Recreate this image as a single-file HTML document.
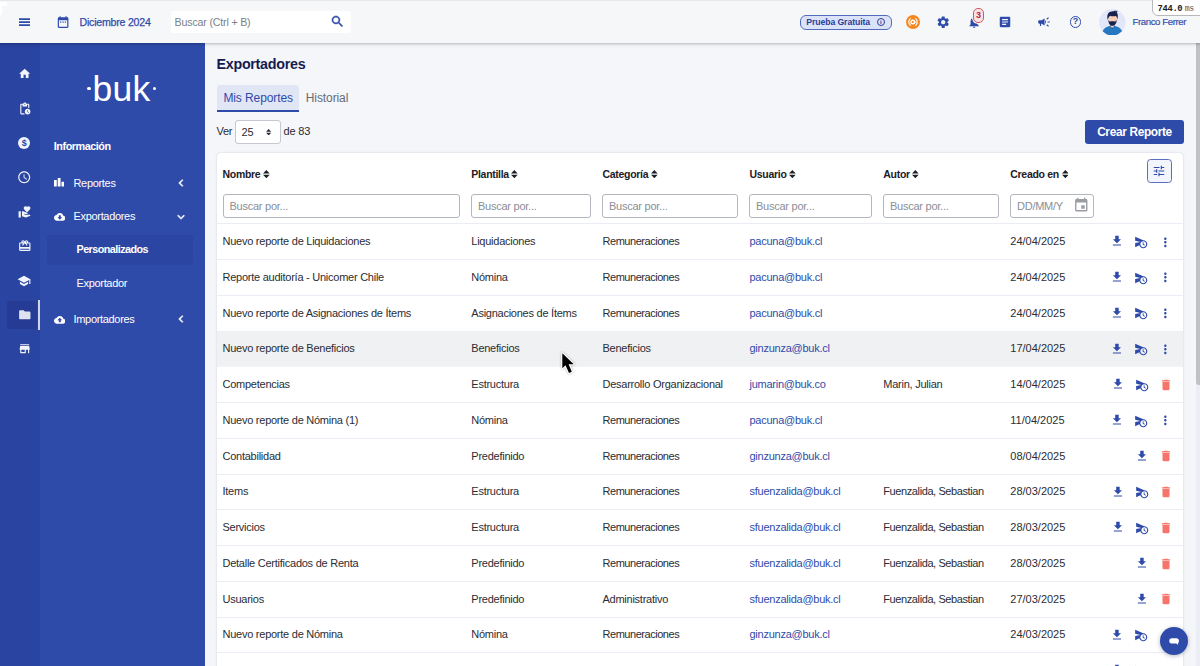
<!DOCTYPE html>
<html lang="es">
<head>
<meta charset="utf-8">
<title>Exportadores</title>
<style>
*{box-sizing:border-box;margin:0;padding:0}
html,body{width:1200px;height:666px;overflow:hidden}
body{font-family:"Liberation Sans",sans-serif;font-size:11px;color:#2a2d34;background:#f5f6f9;position:relative}
.abs{position:absolute}
i{font-style:normal}
#top{position:absolute;left:0;top:0;width:1200px;height:43px;background:#f6f7f9;box-shadow:0 1px 2px rgba(0,0,0,.2),0 2px 4px rgba(0,0,0,.07), inset 0 1px 0 #e7e7e9;z-index:5}
#top .t{position:absolute;color:#2f4baa;white-space:nowrap}
#mes{left:79.500px;top:14.800px;font-size:10.600px;line-height:14px;letter-spacing:-.22px;-webkit-text-stroke:.25px #2f4baa}
#user{left:1132.400px;top:15px;font-size:9.700px;line-height:14px;letter-spacing:-.42px;-webkit-text-stroke:.15px #2f4baa}
#search{position:absolute;left:171.300px;top:11px;width:180px;height:22px;background:#fff;border-radius:2px}
#search span{position:absolute;left:3.300px;top:4px;font-size:10.700px;line-height:14px;color:#7b7f88;letter-spacing:-.2px}
#pill{position:absolute;left:800px;top:14.800px;width:92px;height:15.500px;border:1px solid #546bbd;border-radius:6px;background:#dbe3f8;color:#2a3f9a;font-weight:bold;font-size:8.700px;line-height:13.500px;padding-left:5.300px;white-space:nowrap;letter-spacing:-.1px}
#info{position:absolute;left:75.500px;top:2.300px;width:8.400px;height:8.400px;border:1px solid #2a3f9a;border-radius:50%;font-size:6px;line-height:6.400px;text-align:center;font-weight:bold}
#badge{position:absolute;left:972.900px;top:7.800px;width:11.200px;height:15.200px;border:1px solid #cf5a5f;border-radius:5px;background:#f8e3e4;color:#b8283a;box-shadow:0 0 0 1px #f6f7f9;font-size:9px;font-weight:bold;line-height:13px;text-align:center}
#help{position:absolute;left:1069.600px;top:16.400px;width:11.600px;height:11.600px;border:1.300px solid #2f4baa;border-radius:50%;color:#2f4baa;font-size:9px;font-weight:bold;line-height:9.200px;text-align:center}
#ms{position:absolute;left:1151.600px;top:-1px;width:60px;height:16.600px;background:#fff;border:1px solid #b9b9b9;border-radius:0 0 0 6px;font-family:"Liberation Mono","DejaVu Sans Mono",monospace;font-size:8.300px;line-height:17px;padding-left:5px;color:#555;white-space:nowrap;letter-spacing:-.3px}
#ms b{color:#222;font-size:8.800px;margin-right:-2.300px;letter-spacing:-.35px}
#rail{position:absolute;left:0;top:43px;width:40px;height:623px;background:#2a44a1}
#railsel{position:absolute;left:7px;top:258.400px;width:29.500px;height:28px;background:#263c94;border-radius:3px}
#railbar{position:absolute;left:37.800px;top:257px;width:2.200px;height:29.500px;background:#d0d5e6}
#dollar{position:absolute;left:18.300px;width:12px;height:12px;border-radius:50%;background:#f2f4fb;color:#2a44a1;font-size:9px;font-weight:bold;line-height:12.400px;text-align:center}
#side{position:absolute;left:40px;top:43px;width:165px;height:623px;background:#2f4baa;color:#fff}
#side .i{position:absolute;white-space:nowrap;font-size:11px;line-height:13px;color:#fff;letter-spacing:-.32px}
#side .b{font-weight:bold;font-size:10.800px;letter-spacing:-.45px}
#side .sb{font-weight:bold;font-size:10.800px;letter-spacing:-.55px}
#sel{position:absolute;left:6.800px;top:192px;width:146.400px;height:30px;background:#2b45a2;border-radius:4px}
#logo{position:absolute;left:52.500px;top:26px;font-size:35.500px;line-height:40px;color:#fff;letter-spacing:.2px}
.dot{position:absolute;width:3.400px;height:3.400px;border-radius:50%;background:#fff}
h1{position:absolute;left:216.500px;top:55.400px;font-size:14.300px;font-weight:bold;color:#151b4f;line-height:18px;letter-spacing:-.28px}
#tab1{position:absolute;left:217px;top:85.200px;width:82.300px;height:27.100px;background:#e1e6f5;border-bottom:2px solid #2f4baa;border-radius:3px 3px 0 0;color:#2f4baa;font-size:12px;line-height:26.400px;text-align:center;letter-spacing:-.1px}
#tab2{position:absolute;left:305.800px;top:85.300px;font-size:12px;line-height:26.400px;color:#666b75;letter-spacing:-.1px}
#ver{position:absolute;left:216.500px;top:124.900px;font-size:11px;line-height:13px;letter-spacing:-.3px}
#sel25{position:absolute;left:235px;top:120px;width:46px;height:24px;background:#fff;border:1px solid #c5c8d0;border-radius:3px;font-size:11px;line-height:22px;padding-left:5.500px}
#de83{position:absolute;left:283.500px;top:124.900px;font-size:11px;line-height:13px;letter-spacing:-.15px}
#crear{position:absolute;left:1085px;top:120px;width:99px;height:24px;background:#2f4baa;border-radius:3px;color:#fff;font-size:11.900px;font-weight:bold;line-height:24px;text-align:center;letter-spacing:-.35px}
#card{position:absolute;left:217px;top:153px;width:966.400px;height:520px;background:#fff;border-radius:4px;box-shadow:0 0 2px rgba(80,90,120,.3);overflow:hidden}
.th{position:absolute;top:15.200px;font-size:10.500px;font-weight:bold;color:#1d2027;line-height:12px;white-space:nowrap;letter-spacing:-.3px}
.srt{margin-left:2.600px;vertical-align:-.3px}
.in{position:absolute;top:41px;height:23.500px;border:1px solid #b4b6bd;border-radius:3px;background:#fff;font-size:11px;color:#8a8e96;line-height:22px;padding-left:6px;letter-spacing:-.25px}
#tune{position:absolute;left:929.800px;top:5.500px;width:25.400px;height:24.300px;border:1px solid #5a70bf;border-radius:3.500px;background:#f3f5fc}
.row{position:absolute;left:0;width:968px;height:36px;border-top:1px solid #ebedf4}
.row span{position:absolute;top:10.900px;font-size:11px;line-height:13px;white-space:nowrap;color:#2a2d34;letter-spacing:-.25px}
.row span.u{color:#2f4baa}
.c1{left:5.500px}.c2{left:254.300px}.c3{left:385.500px}.c4{left:532.500px}.c5{left:666.300px}.c6{left:793.300px;letter-spacing:0 !important}
.hov{background:#f0f1f3;border-top-color:#eeeff2}
.nb{border-top-color:#f3f4f8}
#sbtrack{position:absolute;left:1195.500px;top:43px;width:4.500px;height:623px;background:#eceef6;z-index:4}
#sbthumb{position:absolute;left:1196px;top:43px;width:6px;height:342px;background:#c1c1c3;border-radius:0 0 0 3px;z-index:4}
#chat{position:absolute;left:1160.300px;top:627px;width:28px;height:28px;border-radius:50%;background:#2f4baa;box-shadow:0 1px 4px rgba(40,50,90,.35);z-index:10}
</style>
</head>
<body>
<div id="top">
<div class="abs" style="left:0;top:2px;width:7px;height:4px;background:#fff"></div><div class="abs" style="left:0;top:6px;width:1.500px;height:9px;background:#fff"></div>
<svg class="abs" style="left:18.600px;top:18px" width="11" height="9" viewBox="0 0 11 9"><path d="M0 .3h11v1.800H0zM0 3.300h11v1.800H0zM0 6.300h11v1.800H0z" fill="#2f4baa"/></svg>
<svg class="abs" style="left:56.30px;top:15.20px;" width="14.20" height="14.20" viewBox="0 0 24 24"><path fill="#2f4baa" d="M9 11H7v2h2v-2zm4 0h-2v2h2v-2zm4 0h-2v2h2v-2zm2-7h-1V2h-2v2H8V2H6v2H5c-1.110 0-1.990.9-1.990 2L3 20c0 1.100.890 2 2 2h14c1.100 0 2-.9 2-2V6c0-1.100-.9-2-2-2zm0 16H5V9h14v11z"/></svg>
<span class="t" id="mes">Diciembre 2024</span>
<div id="search"><span>Buscar (Ctrl + B)</span><svg class="abs" style="left:158.60px;top:3.20px;" width="15.00" height="15.00" viewBox="0 0 24 24"><path fill="#2f4baa" stroke="#2f4baa" stroke-width="0.7" d="M15.5 14h-.79l-.28-.27C15.41 12.59 16 11.11 16 9.5 16 5.91 13.09 3 9.5 3S3 5.91 3 9.5 5.91 16 9.5 16c1.61 0 3.09-.59 4.23-1.570l.27.28v.79l5 4.990L20.490 19l-4.990-5zm-6 0C7.010 14 5 11.990 5 9.500S7.010 5 9.500 5 14 7.010 14 9.500 11.990 14 9.500 14z"/></svg></div>
<div id="pill">Prueba Gratuita<i id="info">i</i></div>
<svg class="abs" style="left:905.500px;top:14.700px" width="14" height="14" viewBox="0 0 14 14"><circle cx="7" cy="7" r="7" fill="#f6861f"/><circle cx="6.800" cy="7" r="1.800" fill="none" stroke="#fff" stroke-width="1.400"/><path d="M8.600 7h1.600" stroke="#fff" stroke-width="1"/><path d="M4.3 3.6A4.6 4.6 0 0 0 4.300 10.400M9.700 3.600A4.600 4.600 0 0 1 9.700 10.400" fill="none" stroke="#fff" stroke-width="1.2" stroke-linecap="round"/></svg>
<svg class="abs" style="left:936.30px;top:14.60px;" width="14.40" height="14.40" viewBox="0 0 24 24"><path fill="#2f4baa" d="M19.140 12.940c.040-.3.060-.610.060-.940 0-.320-.020-.640-.070-.940l2.030-1.580c.180-.140.230-.410.120-.610l-1.920-3.320c-.120-.220-.370-.290-.590-.220l-2.390.960c-.5-.380-1.030-.7-1.620-.940l-.360-2.540c-.040-.240-.240-.410-.480-.410h-3.840c-.240 0-.430.170-.470.410l-.360 2.540c-.590.240-1.130.570-1.620.940l-2.390-.960c-.220-.080-.470 0-.590.220L2.740 8.870c-.120.210-.080.470.120.610l2.030 1.580c-.050.3-.090.630-.090.940s.020.640.070.940l-2.030 1.580c-.180.140-.230.410-.120.610l1.920 3.320c.120.220.370.290.590.220l2.390-.960c.5.380 1.030.7 1.620.940l.360 2.540c.050.240.240.410.480.410h3.840c.240 0 .440-.170.470-.410l.360-2.540c.590-.240 1.130-.560 1.620-.940l2.390.960c.220.080.470 0 .590-.220l1.920-3.320c.120-.220.070-.470-.120-.610l-2.010-1.580zM12 15.600c-1.980 0-3.600-1.620-3.600-3.600s1.620-3.600 3.600-3.600 3.600 1.620 3.600 3.600-1.620 3.600-3.600 3.600z"/></svg>
<svg class="abs" style="left:967.20px;top:14.90px;" width="14.20" height="14.20" viewBox="0 0 24 24"><path fill="#2f4baa" d="M12 22c1.100 0 2-.9 2-2h-4c0 1.100.890 2 2 2zm6-6v-5c0-3.070-1.640-5.640-4.500-6.320V4c0-.830-.670-1.500-1.500-1.500s-1.500.670-1.500 1.500v.680C7.630 5.360 6 7.920 6 11v5l-2 2v1h16v-1l-2-2z"/></svg>
<div id="badge">3</div>
<svg class="abs" style="left:998.00px;top:15.20px;" width="14.00" height="14.00" viewBox="0 0 24 24"><path fill="#2f4baa" d="M19 3H5c-1.100 0-2 .9-2 2v14c0 1.100.9 2 2 2h14c1.100 0 2-.9 2-2V5c0-1.100-.9-2-2-2zm-5 14H7v-2h7v2zm3-4H7v-2h10v2zm0-4H7V7h10v2z"/></svg>
<svg class="abs" style="left:1037.20px;top:15.30px;" width="14.00" height="14.00" viewBox="0 0 24 24"><path fill="#2f4baa" d="M18 11v2h4v-2h-4zm-2 6.610c.960.710 2.210 1.650 3.200 2.390.4-.530.8-1.070 1.200-1.600-.990-.740-2.240-1.680-3.200-2.400-.4.540-.8 1.080-1.200 1.610zM20.400 5.600c-.4-.530-.8-1.070-1.200-1.600-.990.740-2.240 1.680-3.200 2.400.4.530.8 1.070 1.200 1.600.960-.720 2.210-1.650 3.200-2.400zM4 9c-1.100 0-2 .9-2 2v2c0 1.100.9 2 2 2h1v4h2v-4h1l5 3V6L8 9H4zm11.500 3c0-1.330-.580-2.530-1.500-3.350v6.690c.920-.810 1.500-2.010 1.500-3.340z"/></svg>
<div id="help">?</div>
<svg class="abs" style="left:1099px;top:8.900px" width="26.500" height="26.500" viewBox="0 0 26 26"><defs><clipPath id="av"><circle cx="13" cy="13" r="13"/></clipPath></defs><circle cx="13" cy="13" r="13" fill="#e1e6fa"/><g clip-path="url(#av)"><path d="M2.800 27c0-6.800 3-10.200 10.300-10.200S23.400 20.200 23.400 27z" fill="#2679c0"/><path d="M10 17.200l3.100 2.600 3.100-2.600-1.300-1.200h-3.600z" fill="#1c5f9e"/><rect x="11.500" y="14.500" width="3.200" height="3.600" fill="#f2c7a8"/><rect x="9.400" y="5.500" width="8.200" height="8" rx="2" fill="#f6cdb6"/><path d="M9.200 10.600c0 4.200 1.700 5.900 3.900 5.900s4.200-1.700 4.200-5.900c-.6 1.300-1.200 1.700-2 1.700-.8-.5-3.400-.5-4.200 0-.8 0-1.400-.4-1.900-1.700z" fill="#18224a"/><path d="M8.600 10.800c-1.200-4.900.3-8 3.800-8.300 1.600-.2 2.800-.2 3.600-1.200.3.500.3.900.1 1.200.9-.3 1.500-.8 1.800-1.200.3 1.100-.1 1.900-.5 2.400 1.400.9 1.300 4.300.6 6.800-.2-1.900-.7-3-1.500-3.600-2 .5-4.300.4-5.700-.3-.9.700-1.700 2.200-2.200 4.200z" fill="#18224a"/></g></svg>
<span class="t" id="user">Franco Ferrer</span>
<div id="ms"><b>744.0</b> ms</div>
</div>
<div id="rail"><div id="railsel"></div><div id="railbar"></div>
<svg class="abs" style="left:17.65px;top:24.35px;" width="13.30" height="13.30" viewBox="0 0 24 24"><path fill="#f2f4fb" d="M10 20v-6h4v6h5v-8h3L12 3 2 12h3v8z"/></svg>
<svg class="abs" style="left:17.50px;top:58.80px;" width="13.60" height="13.60" viewBox="0 0 24 24"><path fill="#f2f4fb" d="M17 12c-2.760 0-5 2.240-5 5s2.240 5 5 5 5-2.240 5-5-2.240-5-5-5zm1.650 7.350L16.500 17.200V14h1v2.790l1.850 1.850-.700.710zM18 3h-3.180C14.400 1.840 13.300 1 12 1s-2.400.840-2.820 2H6c-1.100 0-2 .9-2 2v15c0 1.100.9 2 2 2h6.110c-.590-.570-1.070-1.250-1.420-2H6V5h2v3h8V5h2v5.080c.710.100 1.380.310 2 .600V5c0-1.100-.9-2-2-2zm-6 2c-.550 0-1-.450-1-1s.450-1 1-1 1 .450 1 1-.450 1-1 1z"/></svg>
<div id="dollar" style="top:94.0px">$</div>
<svg class="abs" style="left:17.10px;top:127.20px;" width="14.40" height="14.40" viewBox="0 0 24 24"><path fill="#f2f4fb" d="M11.990 2C6.470 2 2 6.480 2 12s4.470 10 9.990 10C17.520 22 22 17.520 22 12S17.520 2 11.990 2zM12 20c-4.420 0-8-3.580-8-8s3.580-8 8-8 8 3.580 8 8-3.580 8-8 8zm.5-13H11v6l5.250 3.150.750-1.230-4.500-2.670z"/></svg>
<svg class="abs" style="left:17.50px;top:162.40px;" width="13.60" height="13.60" viewBox="0 0 24 24"><path fill="#f2f4fb" d="M1 11h4v11H1zM16 3.250C16.650 2.490 17.660 2 18.700 2 20.550 2 22 3.450 22 5.300c0 2.270-2.910 4.900-6 7.700-3.090-2.810-6-5.440-6-7.700C10 3.450 11.450 2 13.300 2c1.040 0 2.050.490 2.700 1.250zM20 17h-7l-2.090-.730.330-.940L13 16h2.820c.650 0 1.180-.530 1.180-1.180 0-.490-.310-.930-.770-1.110L8.970 11H7v9.020L14 22l8.010-3c-.010-1.100-.9-2-2.010-2z"/></svg>
<svg class="abs" style="left:17.50px;top:196.20px;" width="13.60" height="13.60" viewBox="0 0 24 24"><path fill="#f2f4fb" d="M20 6h-2.180c.110-.310.180-.650.180-1 0-1.660-1.340-3-3-3-1.050 0-1.960.540-2.500 1.350l-.5.670-.5-.680C10.960 2.540 10.050 2 9 2 7.340 2 6 3.340 6 5c0 .350.070.690.180 1H4c-1.110 0-1.990.890-1.990 2L2 19c0 1.110.890 2 2 2h16c1.110 0 2-.890 2-2V8c0-1.110-.890-2-2-2zm-5-2c.550 0 1 .450 1 1s-.450 1-1 1-1-.450-1-1 .450-1 1-1zM9 4c.550 0 1 .450 1 1s-.450 1-1 1-1-.450-1-1 .450-1 1-1zm11 15H4v-2h16v2zm0-5H4V8h5.080L7 10.830 8.620 12 11 8.760l1-1.360 1 1.360L15.380 12 17 10.830 14.920 8H20v6z"/></svg>
<svg class="abs" style="left:17.30px;top:230.60px;" width="14.00" height="14.00" viewBox="0 0 24 24"><path fill="#f2f4fb" d="M5 13.180v4L12 21l7-3.820v-4L12 17l-7-3.820zM12 3L1 9l11 6 9-4.910V17h2V9L12 3z"/></svg>
<svg class="abs" style="left:17.50px;top:265.00px;" width="13.60" height="13.60" viewBox="0 0 24 24"><path fill="#dfe3f0" d="M10 4H4c-1.100 0-1.990.9-1.990 2L2 18c0 1.100.9 2 2 2h16c1.100 0 2-.9 2-2V8c0-1.100-.9-2-2-2h-8l-2-2z"/></svg>
<svg class="abs" style="left:17.60px;top:299.30px;" width="13.40" height="13.40" viewBox="0 0 24 24"><path fill="#f2f4fb" d="M20 4H4v2h16V4zm1 10v-2l-1-5H4l-1 5v2h1v6h10v-6h4v6h2v-6h1zm-9 4H6v-4h6v4z"/></svg>
</div>
<div id="side">
<div id="sel"></div>
<span id="logo">buk</span><i class="dot" style="left:47.200px;top:43.700px"></i><i class="dot" style="left:112.600px;top:43.700px"></i>
<span class="i b" style="left:13.800px;top:97px">Información</span>
<svg class="abs" style="left:14px;top:135.400px" width="10.400" height="8.600" viewBox="0 0 10.400 8.600"><path d="M0 2.100h2.800v6.500H0zM3.750 0h2.800v8.600h-2.800zM7.500 3.800h2.800v4.800h-2.800z" fill="#fff"/></svg><span class="i" style="left:33.500px;top:133.500px">Reportes</span><svg class="abs" style="left:133.80px;top:133.00px;" width="14.00" height="14.00" viewBox="0 0 24 24"><path fill="#fff" stroke="#fff" stroke-width="0.9" d="M15.410 7.410L14 6l-6 6 6 6 1.410-1.410L10.830 12z"/></svg>
<svg class="abs" style="left:13.50px;top:167.50px;" width="11.60" height="11.60" viewBox="0 0 24 24"><path fill="#fff" d="M19.350 10.040C18.670 6.590 15.640 4 12 4 9.110 4 6.600 5.640 5.350 8.040 2.340 8.360 0 10.910 0 14c0 3.310 2.690 6 6 6h13c2.760 0 5-2.240 5-5 0-2.640-2.050-4.780-4.650-4.960zM17 13l-5 5-5-5h3V9h4v4h3z"/></svg><span class="i" style="left:33.500px;top:166.700px">Exportadores</span><svg class="abs" style="left:134.40px;top:166.60px;" width="14.00" height="14.00" viewBox="0 0 24 24"><path fill="#fff" stroke="#fff" stroke-width="0.9" d="M16.590 8.590L12 13.170 7.410 8.590 6 10l6 6 6-6z"/></svg>
<span class="i sb" style="left:36.500px;top:200px">Personalizados</span>
<span class="i" style="left:36.500px;top:233.500px">Exportador</span>
<svg class="abs" style="left:13.50px;top:270.70px;" width="11.60" height="11.60" viewBox="0 0 24 24"><path fill="#fff" d="M19.350 10.040C18.670 6.590 15.640 4 12 4 9.110 4 6.600 5.640 5.350 8.040 2.340 8.360 0 10.910 0 14c0 3.310 2.690 6 6 6h13c2.760 0 5-2.240 5-5 0-2.640-2.050-4.780-4.650-4.960zM14 13v4h-4v-4H7l5-5 5 5h-3z"/></svg><span class="i" style="left:33.500px;top:269.700px">Importadores</span><svg class="abs" style="left:133.80px;top:269.20px;" width="14.00" height="14.00" viewBox="0 0 24 24"><path fill="#fff" stroke="#fff" stroke-width="0.9" d="M15.410 7.410L14 6l-6 6 6 6 1.410-1.410L10.830 12z"/></svg>
</div>
<h1>Exportadores</h1>
<div id="tab1">Mis Reportes</div>
<div id="tab2">Historial</div>
<div id="ver">Ver</div><div id="sel25">25<svg class="abs" style="left:30.300px;top:7.600px" width="5.200" height="6.500" viewBox="0 0 6 7.500"><path d="M3 0L5.900 3.100H.1zM3 7.500L.1 4.400h5.800z" fill="#2a2d34"/></svg></div><div id="de83">de 83</div>
<div id="crear">Crear Reporte</div>
<div id="card">
<span class="th" style="left:5.5px">Nombre<svg class="srt" width="6.700" height="8.300" viewBox="0 0 7 8.600"><path d="M3.500 0L7 3.600H0zM3.500 8.600L0 5h7z" fill="#1d2027"/></svg></span>
<span class="th" style="left:254.3px">Plantilla<svg class="srt" width="6.700" height="8.300" viewBox="0 0 7 8.600"><path d="M3.500 0L7 3.600H0zM3.500 8.600L0 5h7z" fill="#1d2027"/></svg></span>
<span class="th" style="left:385.5px">Categoría<svg class="srt" width="6.700" height="8.300" viewBox="0 0 7 8.600"><path d="M3.500 0L7 3.600H0zM3.500 8.600L0 5h7z" fill="#1d2027"/></svg></span>
<span class="th" style="left:532.5px">Usuario<svg class="srt" width="6.700" height="8.300" viewBox="0 0 7 8.600"><path d="M3.500 0L7 3.600H0zM3.500 8.600L0 5h7z" fill="#1d2027"/></svg></span>
<span class="th" style="left:666.3px">Autor<svg class="srt" width="6.700" height="8.300" viewBox="0 0 7 8.600"><path d="M3.500 0L7 3.600H0zM3.500 8.600L0 5h7z" fill="#1d2027"/></svg></span>
<span class="th" style="left:793.3px">Creado en<svg class="srt" width="6.700" height="8.300" viewBox="0 0 7 8.600"><path d="M3.500 0L7 3.600H0zM3.500 8.600L0 5h7z" fill="#1d2027"/></svg></span>
<div class="in" style="left:5.5px;width:237px">Buscar por...</div>
<div class="in" style="left:254.0px;width:120px">Buscar por...</div>
<div class="in" style="left:385.0px;width:136px">Buscar por...</div>
<div class="in" style="left:532.0px;width:123px">Buscar por...</div>
<div class="in" style="left:666.0px;width:116px">Buscar por...</div>
<div class="in" style="left:793px;width:84px">DD/MM/Y<svg class="abs" style="left:62.35px;top:2.25px;" width="16.50" height="16.50" viewBox="0 0 24 24"><path fill="#9a9da4" d="M17 12h-5v5h5v-5zM16 1v2H8V1H6v2H5c-1.110 0-1.990.9-1.990 2L3 19c0 1.100.890 2 2 2h14c1.100 0 2-.9 2-2V5c0-1.100-.9-2-2-2h-1V1h-2zm3 18H5V8h14v11z"/></svg></div>
<div id="tune"><svg class="abs" style="left:4.40px;top:4.20px;" width="14.00" height="14.00" viewBox="0 0 24 24"><path fill="#2f4baa" d="M3 17v2h6v-2H3zM3 5v2h10V5H3zm10 16v-2h8v-2h-8v-2h-2v6h2zM7 9v2H3v2h4v2h2V9H7zm14 4v-2H11v2h10zm-6-4h2V7h4V5h-4V3h-2v6z"/></svg></div>
<div class="row" style="top:70.30px"><span class="c1">Nuevo reporte de Liquidaciones</span><span class="c2">Liquidaciones</span><span class="c3" style="letter-spacing:-0.46px">Remuneraciones</span><span class="c4 u">pacuna@buk.cl</span><span class="c6">24/04/2025</span><svg class="abs" style="left:892.75px;top:10.15px;" width="13.90" height="13.90" viewBox="0 0 24 24"><path fill="#2f4baa" d="M19 9h-4V3H9v6H5l7 7 7-7zM5 18v2h14v-2H5z"/></svg><svg class="abs" style="left:916.75px;top:10.65px;" width="13.90" height="13.90" viewBox="0 0 24 24"><path fill="#2f4baa" d="M16.500 12.500H15v4l3 2 .750-1.230-2.250-1.520V12.500zM16 9L2 3v7l9 2-9 2v7l7.270-3.110C10.090 20.830 12.790 23 16 23c3.860 0 7-3.140 7-7s-3.140-7-7-7zm0 12c-2.750 0-4.980-2.220-5-4.970v-.070c.020-2.740 2.250-4.970 5-4.970 2.760 0 5 2.240 5 5S18.760 21 16 21z"/></svg><svg class="abs" style="left:940.95px;top:10.25px;" width="14.70" height="14.70" viewBox="0 0 24 24"><path fill="#2f4baa" d="M12 8c1.100 0 2-.9 2-2s-.9-2-2-2-2 .9-2 2 .9 2 2 2zm0 2c-1.100 0-2 .9-2 2s.9 2 2 2 2-.9 2-2-.9-2-2-2zm0 6c-1.100 0-2 .9-2 2s.9 2 2 2 2-.9 2-2-.9-2-2-2z"/></svg></div>
<div class="row" style="top:106.05px"><span class="c1">Reporte auditoría - Unicomer Chile</span><span class="c2">Nómina</span><span class="c3" style="letter-spacing:-0.46px">Remuneraciones</span><span class="c4 u">pacuna@buk.cl</span><span class="c6">24/04/2025</span><svg class="abs" style="left:892.75px;top:10.15px;" width="13.90" height="13.90" viewBox="0 0 24 24"><path fill="#2f4baa" d="M19 9h-4V3H9v6H5l7 7 7-7zM5 18v2h14v-2H5z"/></svg><svg class="abs" style="left:916.75px;top:10.65px;" width="13.90" height="13.90" viewBox="0 0 24 24"><path fill="#2f4baa" d="M16.500 12.500H15v4l3 2 .750-1.230-2.250-1.520V12.500zM16 9L2 3v7l9 2-9 2v7l7.270-3.110C10.090 20.830 12.790 23 16 23c3.860 0 7-3.140 7-7s-3.140-7-7-7zm0 12c-2.750 0-4.980-2.220-5-4.970v-.070c.020-2.740 2.250-4.970 5-4.970 2.760 0 5 2.240 5 5S18.760 21 16 21z"/></svg><svg class="abs" style="left:940.95px;top:10.25px;" width="14.70" height="14.70" viewBox="0 0 24 24"><path fill="#2f4baa" d="M12 8c1.100 0 2-.9 2-2s-.9-2-2-2-2 .9-2 2 .9 2 2 2zm0 2c-1.100 0-2 .9-2 2s.9 2 2 2 2-.9 2-2-.9-2-2-2zm0 6c-1.100 0-2 .9-2 2s.9 2 2 2 2-.9 2-2-.9-2-2-2z"/></svg></div>
<div class="row" style="top:141.80px"><span class="c1">Nuevo reporte de Asignaciones de Ítems</span><span class="c2">Asignaciones de Ítems</span><span class="c3" style="letter-spacing:-0.46px">Remuneraciones</span><span class="c4 u">pacuna@buk.cl</span><span class="c6">24/04/2025</span><svg class="abs" style="left:892.75px;top:10.15px;" width="13.90" height="13.90" viewBox="0 0 24 24"><path fill="#2f4baa" d="M19 9h-4V3H9v6H5l7 7 7-7zM5 18v2h14v-2H5z"/></svg><svg class="abs" style="left:916.75px;top:10.65px;" width="13.90" height="13.90" viewBox="0 0 24 24"><path fill="#2f4baa" d="M16.500 12.500H15v4l3 2 .750-1.230-2.250-1.520V12.500zM16 9L2 3v7l9 2-9 2v7l7.270-3.110C10.090 20.830 12.790 23 16 23c3.860 0 7-3.140 7-7s-3.140-7-7-7zm0 12c-2.750 0-4.980-2.220-5-4.970v-.070c.020-2.740 2.250-4.970 5-4.970 2.760 0 5 2.240 5 5S18.760 21 16 21z"/></svg><svg class="abs" style="left:940.95px;top:10.25px;" width="14.70" height="14.70" viewBox="0 0 24 24"><path fill="#2f4baa" d="M12 8c1.100 0 2-.9 2-2s-.9-2-2-2-2 .9-2 2 .9 2 2 2zm0 2c-1.100 0-2 .9-2 2s.9 2 2 2 2-.9 2-2-.9-2-2-2zm0 6c-1.100 0-2 .9-2 2s.9 2 2 2 2-.9 2-2-.9-2-2-2z"/></svg></div>
<div class="row hov" style="top:177.55px"><span class="c1">Nuevo reporte de Beneficios</span><span class="c2">Beneficios</span><span class="c3">Beneficios</span><span class="c4 u">ginzunza@buk.cl</span><span class="c6">17/04/2025</span><svg class="abs" style="left:892.75px;top:10.15px;" width="13.90" height="13.90" viewBox="0 0 24 24"><path fill="#2f4baa" d="M19 9h-4V3H9v6H5l7 7 7-7zM5 18v2h14v-2H5z"/></svg><svg class="abs" style="left:916.75px;top:10.65px;" width="13.90" height="13.90" viewBox="0 0 24 24"><path fill="#2f4baa" d="M16.500 12.500H15v4l3 2 .750-1.230-2.250-1.520V12.500zM16 9L2 3v7l9 2-9 2v7l7.270-3.110C10.090 20.830 12.790 23 16 23c3.860 0 7-3.140 7-7s-3.140-7-7-7zm0 12c-2.750 0-4.980-2.220-5-4.970v-.070c.020-2.740 2.250-4.970 5-4.970 2.760 0 5 2.240 5 5S18.760 21 16 21z"/></svg><svg class="abs" style="left:940.95px;top:10.25px;" width="14.70" height="14.70" viewBox="0 0 24 24"><path fill="#2f4baa" d="M12 8c1.100 0 2-.9 2-2s-.9-2-2-2-2 .9-2 2 .9 2 2 2zm0 2c-1.100 0-2 .9-2 2s.9 2 2 2 2-.9 2-2-.9-2-2-2zm0 6c-1.100 0-2 .9-2 2s.9 2 2 2 2-.9 2-2-.9-2-2-2z"/></svg></div>
<div class="row nb" style="top:213.30px"><span class="c1">Competencias</span><span class="c2">Estructura</span><span class="c3">Desarrollo Organizacional</span><span class="c4 u">jumarin@buk.co</span><span class="c5">Marin, Julian</span><span class="c6">14/04/2025</span><svg class="abs" style="left:894.25px;top:10.15px;" width="13.90" height="13.90" viewBox="0 0 24 24"><path fill="#2f4baa" d="M19 9h-4V3H9v6H5l7 7 7-7zM5 18v2h14v-2H5z"/></svg><svg class="abs" style="left:918.15px;top:10.65px;" width="13.90" height="13.90" viewBox="0 0 24 24"><path fill="#2f4baa" d="M16.500 12.500H15v4l3 2 .750-1.230-2.250-1.520V12.500zM16 9L2 3v7l9 2-9 2v7l7.270-3.110C10.090 20.830 12.790 23 16 23c3.860 0 7-3.140 7-7s-3.140-7-7-7zm0 12c-2.750 0-4.980-2.220-5-4.970v-.070c.020-2.740 2.250-4.970 5-4.970 2.760 0 5 2.240 5 5S18.760 21 16 21z"/></svg><svg class="abs" style="left:941.50px;top:10.60px;" width="14.00" height="14.00" viewBox="0 0 24 24"><path fill="#f7746a" d="M6 19c0 1.100.9 2 2 2h8c1.100 0 2-.9 2-2V7H6v12zM19 4h-3.500l-1-1h-5l-1 1H5v2h14V4z"/></svg></div>
<div class="row" style="top:249.05px"><span class="c1">Nuevo reporte de Nómina (1)</span><span class="c2">Nómina</span><span class="c3" style="letter-spacing:-0.46px">Remuneraciones</span><span class="c4 u">pacuna@buk.cl</span><span class="c6">11/04/2025</span><svg class="abs" style="left:892.75px;top:10.15px;" width="13.90" height="13.90" viewBox="0 0 24 24"><path fill="#2f4baa" d="M19 9h-4V3H9v6H5l7 7 7-7zM5 18v2h14v-2H5z"/></svg><svg class="abs" style="left:916.75px;top:10.65px;" width="13.90" height="13.90" viewBox="0 0 24 24"><path fill="#2f4baa" d="M16.500 12.500H15v4l3 2 .750-1.230-2.250-1.520V12.500zM16 9L2 3v7l9 2-9 2v7l7.270-3.110C10.090 20.830 12.790 23 16 23c3.860 0 7-3.140 7-7s-3.140-7-7-7zm0 12c-2.750 0-4.980-2.220-5-4.970v-.070c.020-2.740 2.250-4.970 5-4.970 2.760 0 5 2.240 5 5S18.760 21 16 21z"/></svg><svg class="abs" style="left:940.95px;top:10.25px;" width="14.70" height="14.70" viewBox="0 0 24 24"><path fill="#2f4baa" d="M12 8c1.100 0 2-.9 2-2s-.9-2-2-2-2 .9-2 2 .9 2 2 2zm0 2c-1.100 0-2 .9-2 2s.9 2 2 2 2-.9 2-2-.9-2-2-2zm0 6c-1.100 0-2 .9-2 2s.9 2 2 2 2-.9 2-2-.9-2-2-2z"/></svg></div>
<div class="row" style="top:284.80px"><span class="c1">Contabilidad</span><span class="c2">Predefinido</span><span class="c3" style="letter-spacing:-0.46px">Remuneraciones</span><span class="c4 u">ginzunza@buk.cl</span><span class="c6">08/04/2025</span><svg class="abs" style="left:917.75px;top:10.15px;" width="13.90" height="13.90" viewBox="0 0 24 24"><path fill="#2f4baa" d="M19 9h-4V3H9v6H5l7 7 7-7zM5 18v2h14v-2H5z"/></svg><svg class="abs" style="left:941.50px;top:10.60px;" width="14.00" height="14.00" viewBox="0 0 24 24"><path fill="#f7746a" d="M6 19c0 1.100.9 2 2 2h8c1.100 0 2-.9 2-2V7H6v12zM19 4h-3.500l-1-1h-5l-1 1H5v2h14V4z"/></svg></div>
<div class="row" style="top:320.55px"><span class="c1">Items</span><span class="c2">Estructura</span><span class="c3" style="letter-spacing:-0.46px">Remuneraciones</span><span class="c4 u">sfuenzalida@buk.cl</span><span class="c5" style="letter-spacing:-0.4px">Fuenzalida, Sebastian</span><span class="c6">28/03/2025</span><svg class="abs" style="left:894.25px;top:10.15px;" width="13.90" height="13.90" viewBox="0 0 24 24"><path fill="#2f4baa" d="M19 9h-4V3H9v6H5l7 7 7-7zM5 18v2h14v-2H5z"/></svg><svg class="abs" style="left:918.15px;top:10.65px;" width="13.90" height="13.90" viewBox="0 0 24 24"><path fill="#2f4baa" d="M16.500 12.500H15v4l3 2 .750-1.230-2.250-1.520V12.500zM16 9L2 3v7l9 2-9 2v7l7.270-3.110C10.090 20.830 12.790 23 16 23c3.860 0 7-3.140 7-7s-3.140-7-7-7zm0 12c-2.750 0-4.980-2.220-5-4.970v-.070c.020-2.740 2.250-4.970 5-4.970 2.760 0 5 2.240 5 5S18.760 21 16 21z"/></svg><svg class="abs" style="left:941.50px;top:10.60px;" width="14.00" height="14.00" viewBox="0 0 24 24"><path fill="#f7746a" d="M6 19c0 1.100.9 2 2 2h8c1.100 0 2-.9 2-2V7H6v12zM19 4h-3.500l-1-1h-5l-1 1H5v2h14V4z"/></svg></div>
<div class="row" style="top:356.30px"><span class="c1">Servicios</span><span class="c2">Estructura</span><span class="c3" style="letter-spacing:-0.46px">Remuneraciones</span><span class="c4 u">sfuenzalida@buk.cl</span><span class="c5" style="letter-spacing:-0.4px">Fuenzalida, Sebastian</span><span class="c6">28/03/2025</span><svg class="abs" style="left:894.25px;top:10.15px;" width="13.90" height="13.90" viewBox="0 0 24 24"><path fill="#2f4baa" d="M19 9h-4V3H9v6H5l7 7 7-7zM5 18v2h14v-2H5z"/></svg><svg class="abs" style="left:918.15px;top:10.65px;" width="13.90" height="13.90" viewBox="0 0 24 24"><path fill="#2f4baa" d="M16.500 12.500H15v4l3 2 .750-1.230-2.250-1.520V12.500zM16 9L2 3v7l9 2-9 2v7l7.270-3.110C10.090 20.830 12.790 23 16 23c3.860 0 7-3.140 7-7s-3.140-7-7-7zm0 12c-2.750 0-4.980-2.220-5-4.970v-.070c.020-2.740 2.250-4.970 5-4.970 2.760 0 5 2.240 5 5S18.760 21 16 21z"/></svg><svg class="abs" style="left:941.50px;top:10.60px;" width="14.00" height="14.00" viewBox="0 0 24 24"><path fill="#f7746a" d="M6 19c0 1.100.9 2 2 2h8c1.100 0 2-.9 2-2V7H6v12zM19 4h-3.500l-1-1h-5l-1 1H5v2h14V4z"/></svg></div>
<div class="row" style="top:392.05px"><span class="c1">Detalle Certificados de Renta</span><span class="c2">Predefinido</span><span class="c3" style="letter-spacing:-0.46px">Remuneraciones</span><span class="c4 u">sfuenzalida@buk.cl</span><span class="c5" style="letter-spacing:-0.4px">Fuenzalida, Sebastian</span><span class="c6">28/03/2025</span><svg class="abs" style="left:917.75px;top:10.15px;" width="13.90" height="13.90" viewBox="0 0 24 24"><path fill="#2f4baa" d="M19 9h-4V3H9v6H5l7 7 7-7zM5 18v2h14v-2H5z"/></svg><svg class="abs" style="left:941.50px;top:10.60px;" width="14.00" height="14.00" viewBox="0 0 24 24"><path fill="#f7746a" d="M6 19c0 1.100.9 2 2 2h8c1.100 0 2-.9 2-2V7H6v12zM19 4h-3.500l-1-1h-5l-1 1H5v2h14V4z"/></svg></div>
<div class="row" style="top:427.80px"><span class="c1">Usuarios</span><span class="c2">Predefinido</span><span class="c3">Administrativo</span><span class="c4 u">sfuenzalida@buk.cl</span><span class="c5" style="letter-spacing:-0.4px">Fuenzalida, Sebastian</span><span class="c6">27/03/2025</span><svg class="abs" style="left:917.75px;top:10.15px;" width="13.90" height="13.90" viewBox="0 0 24 24"><path fill="#2f4baa" d="M19 9h-4V3H9v6H5l7 7 7-7zM5 18v2h14v-2H5z"/></svg><svg class="abs" style="left:941.50px;top:10.60px;" width="14.00" height="14.00" viewBox="0 0 24 24"><path fill="#f7746a" d="M6 19c0 1.100.9 2 2 2h8c1.100 0 2-.9 2-2V7H6v12zM19 4h-3.500l-1-1h-5l-1 1H5v2h14V4z"/></svg></div>
<div class="row" style="top:463.55px"><span class="c1">Nuevo reporte de Nómina</span><span class="c2">Nómina</span><span class="c3" style="letter-spacing:-0.46px">Remuneraciones</span><span class="c4 u">ginzunza@buk.cl</span><span class="c6">24/03/2025</span><svg class="abs" style="left:892.75px;top:10.15px;" width="13.90" height="13.90" viewBox="0 0 24 24"><path fill="#2f4baa" d="M19 9h-4V3H9v6H5l7 7 7-7zM5 18v2h14v-2H5z"/></svg><svg class="abs" style="left:916.75px;top:10.65px;" width="13.90" height="13.90" viewBox="0 0 24 24"><path fill="#2f4baa" d="M16.500 12.500H15v4l3 2 .750-1.230-2.250-1.520V12.500zM16 9L2 3v7l9 2-9 2v7l7.270-3.110C10.090 20.830 12.790 23 16 23c3.860 0 7-3.140 7-7s-3.140-7-7-7zm0 12c-2.750 0-4.980-2.220-5-4.970v-.070c.020-2.740 2.250-4.970 5-4.970 2.760 0 5 2.240 5 5S18.760 21 16 21z"/></svg></div>
<div class="row" style="top:499.30px"><svg class="abs" style="left:892.75px;top:10.15px;" width="13.90" height="13.90" viewBox="0 0 24 24"><path fill="#2f4baa" d="M19 9h-4V3H9v6H5l7 7 7-7zM5 18v2h14v-2H5z"/></svg><svg class="abs" style="left:916.75px;top:10.65px;" width="13.90" height="13.90" viewBox="0 0 24 24"><path fill="#2f4baa" d="M16.500 12.500H15v4l3 2 .750-1.230-2.250-1.520V12.500zM16 9L2 3v7l9 2-9 2v7l7.270-3.110C10.090 20.830 12.790 23 16 23c3.860 0 7-3.140 7-7s-3.140-7-7-7zm0 12c-2.750 0-4.980-2.220-5-4.970v-.070c.020-2.740 2.250-4.970 5-4.970 2.760 0 5 2.240 5 5S18.760 21 16 21z"/></svg><svg class="abs" style="left:940.95px;top:10.25px;" width="14.70" height="14.70" viewBox="0 0 24 24"><path fill="#2f4baa" d="M12 8c1.100 0 2-.9 2-2s-.9-2-2-2-2 .9-2 2 .9 2 2 2zm0 2c-1.100 0-2 .9-2 2s.9 2 2 2 2-.9 2-2-.9-2-2-2zm0 6c-1.100 0-2 .9-2 2s.9 2 2 2 2-.9 2-2-.9-2-2-2z"/></svg></div>
</div>
<div id="sbtrack"></div><div id="sbthumb"></div>
<div id="chat"><svg width="28" height="28" viewBox="0 0 28 28"><rect x="9.300" y="11.200" width="9.600" height="5.200" rx="2.500" fill="#fff"/><path d="M15.800 15.800l2.400 2.300-.3-2.800z" fill="#fff"/></svg></div>
<svg class="abs" style="left:555px;top:348px;z-index:20;filter:drop-shadow(0 .6px .8px rgba(0,0,0,.3))" width="28" height="32" viewBox="0 0 28 32"><path d="M7.300 5.300V20.200L10.500 17.200 14 25l2.800-1.200-3.200-7.500 5.200-.1z" fill="#000" stroke="#fff" stroke-width="2.200" stroke-linejoin="round" paint-order="stroke"/></svg>
</body>
</html>
